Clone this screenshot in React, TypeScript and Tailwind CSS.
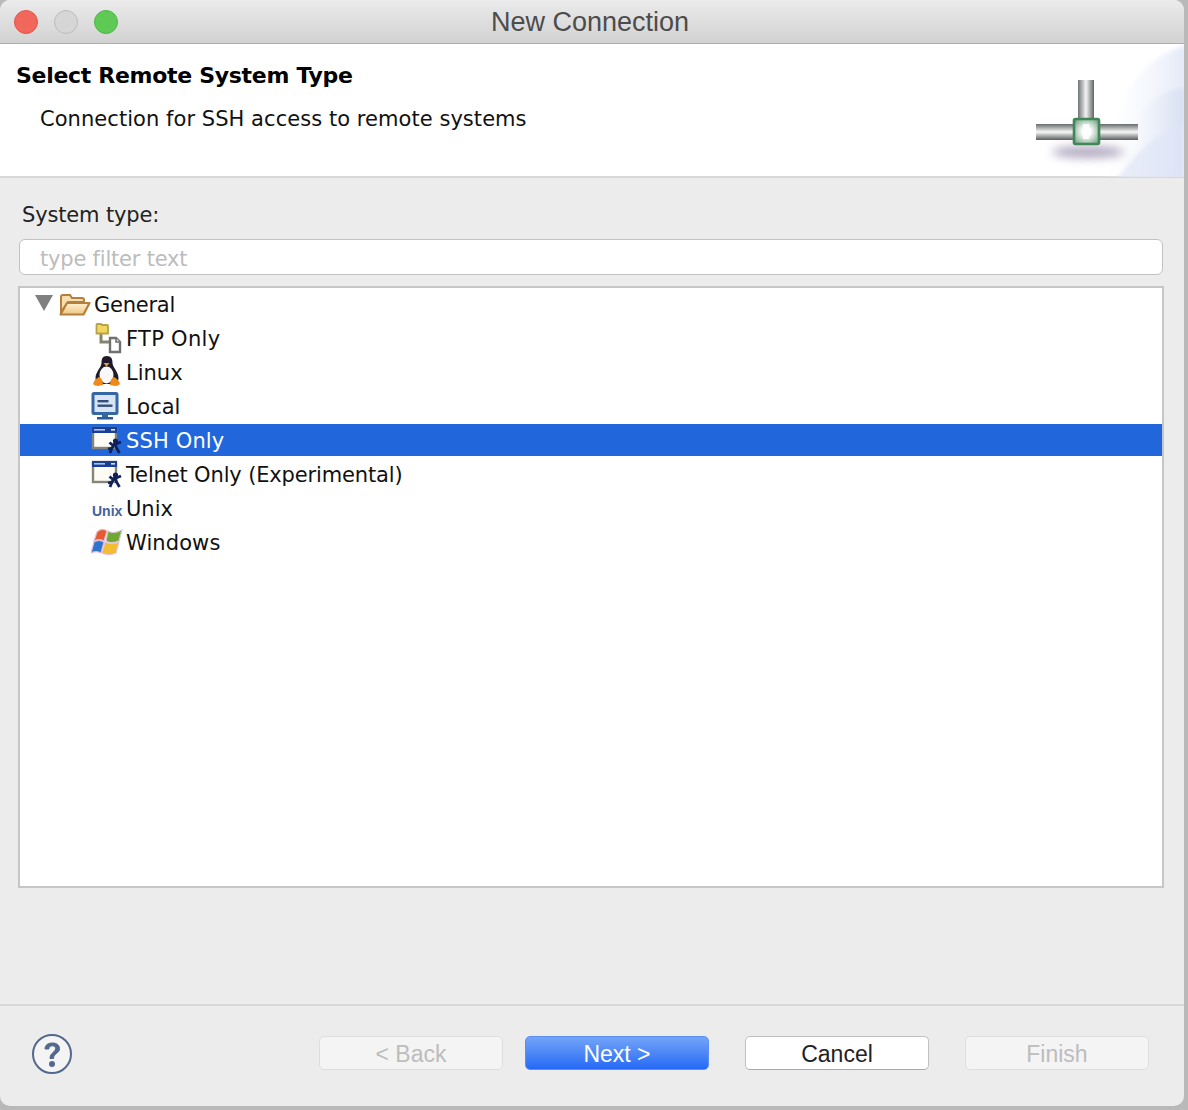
const lucida = "font-['DejaVu_Sans',sans-serif]";
const helv = "font-['Liberation_Sans',sans-serif]";

function Folder() {
  return (
    <svg width="32" height="24" viewBox="0 0 32 24" className="shrink-0">
      <defs>
        <linearGradient id="fo" x1="0" y1="0" x2="0" y2="1">
          <stop offset="0" stopColor="#fff2d2" />
          <stop offset="1" stopColor="#efc684" />
        </linearGradient>
      </defs>
      <path d="M2 20V5q0-2 2-2h7l2 3h10q2 0 2 2v2H9z" fill="#f5dfb0" stroke="#b57f3e" strokeWidth="2" />
      <path d="M1.500 22.500 8 11h22.500l-6 11.500z" fill="url(#fo)" stroke="#b57f3e" strokeWidth="2.200" strokeLinejoin="round" />
    </svg>
  );
}

function Ftp() {
  return (
    <svg width="32" height="32" viewBox="0 0 32 32" className="shrink-0">
      <path d="M10 11v9h9" fill="none" stroke="#85856f" strokeWidth="3" />
      <path d="M5.500 11.500V3q0-1 1-1h3.500l1 1h5q1 0 1 1v7.500z" fill="#f0d860" stroke="#b7a248" strokeWidth="1.800" />
      <path d="M19 16h6l4 4v10H19z" fill="#ffffff" stroke="#707070" strokeWidth="2.400" />
      <path d="M25 16v4h4" fill="#dddddd" stroke="#707070" strokeWidth="1.600" />
    </svg>
  );
}

function Penguin() {
  return (
    <svg width="32" height="32" viewBox="0 0 32 32" className="shrink-0">
      <path d="M15.500 0c-4 0-5 3-5 7 0 4-6 9-6 15 0 4 3 6 5 6h13c2 0 5-2 5-6 0-6-6-11-6-15 0-4-1-7-6-7z" fill="#1e1a2a" />
      <ellipse cx="15.500" cy="19" rx="7" ry="8.500" fill="#f8f8f8" />
      <path d="M12.500 7h6l-3 3.500z" fill="#efa224" />
      <path d="M2 28c1-4 4-6 6-7 3 1 4 5 4 8l-5 1c-2 0-4-1-5-2z" fill="#ee8a1a" />
      <path d="M29 28c-1-4-4-6-6-7-3 1-4 5-4 8l5 1c2 0 4-1 5-2z" fill="#ee8a1a" />
    </svg>
  );
}

function Monitor() {
  return (
    <svg width="28" height="28" viewBox="0 0 28 28" className="shrink-0">
      <rect x="2" y="1.500" width="24" height="20" rx="1" fill="#d9e4f4" stroke="#3567a4" strokeWidth="3" />
      <rect x="6.500" y="8" width="11" height="2.400" fill="#35507f" />
      <rect x="6.500" y="12.500" width="15" height="2.400" fill="#35507f" />
      <rect x="11" y="23" width="6" height="2" fill="#3567a4" />
      <rect x="6" y="25" width="16" height="2.500" fill="#2b5a96" />
    </svg>
  );
}

function Remote() {
  return (
    <svg width="32" height="32" viewBox="0 0 32 32" className="shrink-0">
      <rect x="2" y="4" width="23" height="20" fill="#fdfcf4" stroke="#85857a" strokeWidth="2.400" />
      <rect x="1" y="3" width="25" height="6" fill="#1c3f96" />
      <rect x="3" y="5" width="11" height="1.600" fill="#a9c2ee" />
      <rect x="20" y="5" width="4" height="1.600" fill="#d8e2f6" />
      <circle cx="24.500" cy="17" r="2.600" fill="#10205a" />
      <path d="M24 19l-3 5-4 1M24 19l1.500 5 3 5M21.500 21l-3-2.500M25 20l5-2M21 24l-2 5" fill="none" stroke="#10205a" strokeWidth="2.800" />
    </svg>
  );
}

function UnixIcon() {
  return (
    <span className={`w-[32px] shrink-0 pl-px pt-[5px] text-[14px] leading-none font-bold text-[#45609f] ${helv}`}>Unix</span>
  );
}

function WindowsIcon() {
  return (
    <svg width="32" height="30" viewBox="0 0 32 30" className="shrink-0">
      <path d="M6 5c3-3 7-3 10-1l-3 10c-3-2-6-2-10 0z" fill="#e65a30" stroke="#e3bcd0" strokeWidth="1.200" />
      <path d="M17 4c3 2 8 2 14-1l-3 11c-5 2-10 2-13 0z" fill="#6fa833" stroke="#d9c7d8" strokeWidth="1.200" />
      <path d="M3 15c3-2 7-2 10 0l-3 11c-3-2-6-2-10 0z" fill="#2f74cc" stroke="#d9b7e0" strokeWidth="1.200" />
      <path d="M14 15c4 2 9 2 14 0l-3 11c-5 2-10 2-14 0z" fill="#f2bd2e" stroke="#e3c3dc" strokeWidth="1.200" />
    </svg>
  );
}

function Banner() {
  return (
    <svg width="148" height="133" viewBox="0 0 148 133" className="shrink-0">
      <defs>
        <linearGradient id="wash" x1="0" y1="0" x2="1" y2="0">
          <stop offset="0" stopColor="#ffffff" stopOpacity="0" />
          <stop offset="1" stopColor="#e2e9f7" />
        </linearGradient>
        <linearGradient id="wash2" x1="0" y1="0" x2="1" y2="0">
          <stop offset="0" stopColor="#ffffff" stopOpacity="0" />
          <stop offset="1" stopColor="#d6dff3" />
        </linearGradient>
        <linearGradient id="pv" x1="0" y1="0" x2="1" y2="0">
          <stop offset="0" stopColor="#6f7474" />
          <stop offset="0.5" stopColor="#f4f4f4" />
          <stop offset="1" stopColor="#5f6464" />
        </linearGradient>
        <linearGradient id="ph" x1="0" y1="0" x2="0" y2="1">
          <stop offset="0" stopColor="#676c6c" />
          <stop offset="0.5" stopColor="#f8f8f8" />
          <stop offset="1" stopColor="#585d5d" />
        </linearGradient>
        <radialGradient id="box" cx="0.500" cy="0.500" r="0.650">
          <stop offset="0.250" stopColor="#ffffff" />
          <stop offset="1" stopColor="#6f9f80" />
        </radialGradient>
        <filter id="blur" x="-30%" y="-100%" width="160%" height="300%">
          <feGaussianBlur stdDeviation="5" />
        </filter>
        <filter id="soft" x="-20%" y="-20%" width="140%" height="140%">
          <feGaussianBlur stdDeviation="2" />
        </filter>
      </defs>
      <g filter="url(#soft)">
        <path d="M150 1C108 14 76 50 60 136h90z" fill="url(#wash)" />
        <path d="M150 44C118 46 92 70 76 136h74z" fill="url(#wash2)" />
        <path d="M150 82c-30 6-46 22-70 54h70z" fill="#dfe6f6" opacity="0.7" />
      </g>
      <ellipse cx="52" cy="108" rx="36" ry="6" fill="#7f7098" opacity="0.6" filter="url(#blur)" />
      <rect x="42" y="36" width="16" height="44" fill="url(#pv)" />
      <rect x="0" y="80" width="102" height="16" fill="url(#ph)" />
      <rect x="38" y="75" width="25" height="25" rx="1.500" fill="url(#box)" stroke="#3f8659" strokeWidth="2.600" />
      <rect x="47" y="80" width="6" height="15" fill="#ffffff" opacity="0.9" />
    </svg>
  );
}

function HelpIcon() {
  return (
    <svg width="42" height="42" viewBox="0 0 42 42">
      <circle cx="21" cy="21" r="19" fill="#f4f4f4" stroke="#52688c" strokeWidth="2" />
      <path d="M14 16c0-4 3-6 7.500-6 4 0 7 2 7 5.500 0 5-6 5-6 10h-3.500c0-6 5.500-6 5.500-10 0-1.800-1.300-2.700-3.200-2.700-2 0-3.300 1.200-3.500 3.200z" fill="#52688c" stroke="#52688c" strokeWidth="1" />
      <circle cx="21" cy="31" r="3" fill="#52688c" />
    </svg>
  );
}

const rows: { label: string; icon: React.ReactNode; selected?: boolean; track?: string }[] = [
  { label: "FTP Only", icon: <Ftp />, track: "tracking-[0.3px]" },
  { label: "Linux", icon: <Penguin /> },
  { label: "Local", icon: <Monitor /> },
  { label: "SSH Only", icon: <Remote />, selected: true, track: "tracking-[0.15px]" },
  { label: "Telnet Only (Experimental)", icon: <Remote />, track: "tracking-[-0.15px]" },
  { label: "Unix", icon: <UnixIcon /> },
  { label: "Windows", icon: <WindowsIcon />, track: "tracking-[0.1px]" },
];

function WizardButton({ label, kind }: { label: string; kind: "off" | "primary" | "normal" }) {
  const styles =
    kind === "primary"
      ? "bg-gradient-to-b from-[#74a4f8] to-[#2468f6] text-white border-[#5c8ff0]"
      : kind === "normal"
        ? "bg-white text-[#222222] border-[#c0c0c0] border-b-[#a8a8a8]"
        : "bg-[#f4f4f4] text-[#bdbdbd] border-[#dedede]";
  return (
    <div className={`w-[184px] h-[34px] rounded-[5px] border flex items-center justify-center text-[23px] pt-[2px] ${helv} ${styles}`}>
      {label}
    </div>
  );
}

export default function App() {
  return (
    <div className="w-[1188px] h-[1110px] bg-[#b9b9b9] overflow-hidden">
      <div className="w-[1184px] h-[1106px] bg-[#ececec] rounded-[10px] overflow-hidden flex flex-col">
        <div className={`h-[44px] shrink-0 bg-gradient-to-b from-[#ebebeb] to-[#d2d2d2] border-b border-[#adadad] flex items-center pl-[14px] ${helv}`}>
          <div className="flex gap-[16px] w-[105px] shrink-0">
            <span className="w-6 h-6 rounded-full bg-[#f2675c] border border-[#e0564c]" />
            <span className="w-6 h-6 rounded-full bg-[#d6d6d6] border border-[#bcbcbc]" />
            <span className="w-6 h-6 rounded-full bg-[#5fc955] border border-[#4fb548]" />
          </div>
          <div className="ml-[372px] text-[27px] leading-none text-[#4c4c4c] pt-[2px]">New Connection</div>
        </div>

        <div className={`h-[134px] shrink-0 bg-white border-b-2 border-[#d8d8d8] flex justify-between ${lucida}`}>
          <div className="pl-[16px] pt-[17px]">
            <div className="text-[22px] leading-[30px] font-bold text-black tracking-[-0.3px]">Select Remote System Type</div>
            <div className="pl-[24px] pt-[13px] text-[21px] leading-[30px] text-[#111111] tracking-[0.05px]">Connection for SSH access to remote systems</div>
          </div>
          <Banner />
        </div>

        <div className={`flex-1 flex flex-col ${lucida}`}>
          <div className="pl-[22px] pt-[23px] text-[21px] leading-[28px] text-[#222222] tracking-[-0.15px]">System type:</div>
          <div className="ml-[19px] mr-[21px] mt-[10px] h-[36px] rounded-[6px] bg-white border border-[#c2c2c2] flex items-center pl-[20px] pt-[5px] text-[21px] text-[#bcbcbc] tracking-[-0.2px]">
            type filter text
          </div>
          <div className="ml-[18px] mr-[20px] mt-[11px] h-[602px] bg-white border-2 border-[#c6c6c6] overflow-hidden">
            <div className="-mt-px">
              <div className="h-[34px] flex items-center">
                <svg width="18" height="16" viewBox="0 0 18 16" className="ml-[15px] shrink-0 mb-[2px]">
                  <path d="M0 0h18l-9 16z" fill="#808080" />
                </svg>
                <span className="ml-[6px] flex"><Folder /></span>
                <span className="ml-[3px] pt-[2px] text-[21px] leading-none text-[#111111] tracking-[-0.25px]">General</span>
              </div>
              {rows.map((r) => (
                <div key={r.label} className="h-[34px] flex items-center">
                  <div className={`h-[32px] w-full flex items-center ${r.selected ? "bg-[#2166da] text-white" : "text-[#111111]"}`}>
                    <span className="w-[106px] pl-[71px] shrink-0 flex items-center h-[32px]">{r.icon}</span>
                    <span className={`pt-[2px] text-[21px] leading-none whitespace-nowrap ${r.track ?? ""}`}>{r.label}</span>
                  </div>
                </div>
              ))}
            </div>
          </div>
          <div className="mt-[116px] border-t-2 border-[#d8d8d8] flex-1 flex items-start pt-[30px]">
            <div className="ml-[31px] -mt-[3px]"><HelpIcon /></div>
            <div className="ml-[246px] flex">
              <WizardButton label="< Back" kind="off" />
              <div className="ml-[22px]"><WizardButton label="Next >" kind="primary" /></div>
              <div className="ml-[36px]"><WizardButton label="Cancel" kind="normal" /></div>
              <div className="ml-[36px]"><WizardButton label="Finish" kind="off" /></div>
            </div>
          </div>
        </div>
      </div>
    </div>
  );
}
